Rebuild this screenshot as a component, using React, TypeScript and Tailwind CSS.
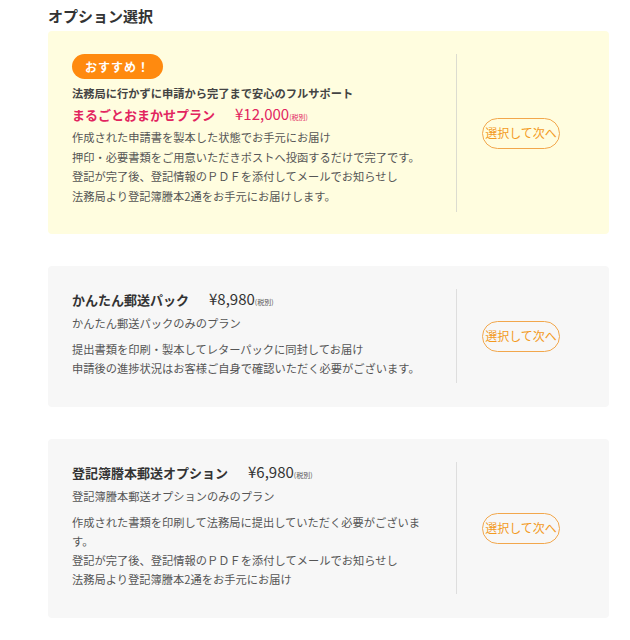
const FONT = { fontFamily: '"Noto Sans CJK JP", "Noto Sans", sans-serif' };

type Plan = {
  name: string;
  price: string;
  subtitle: string;
  lines: string[];
};

const PLANS: Plan[] = [
  {
    name: "かんたん郵送パック",
    price: "¥8,980",
    subtitle: "かんたん郵送パックのみのプラン",
    lines: [
      "提出書類を印刷・製本してレターパックに同封してお届け",
      "申請後の進捗状況はお客様ご自身で確認いただく必要がございます。",
    ],
  },
  {
    name: "登記簿謄本郵送オプション",
    price: "¥6,980",
    subtitle: "登記簿謄本郵送オプションのみのプラン",
    lines: [
      "作成された書類を印刷して法務局に提出していただく必要がございます。",
      "登記が完了後、登記情報のＰＤＦを添付してメールでお知らせし",
      "法務局より登記簿謄本2通をお手元にお届け",
    ],
  },
];

function NextButton() {
  return (
    <div className="flex flex-1 items-center justify-center">
      <button
        type="button"
        className="flex h-[31px] w-[78px] items-center justify-center rounded-full border border-[#f2a74c] text-[12px] leading-none text-[#f39a1e]"
      >
        選択して次へ
      </button>
    </div>
  );
}

function Tax({ className }: { className: string }) {
  return <span className={`text-[7px] leading-none ${className}`}>(税別)</span>;
}

export default function App() {
  return (
    <div className="min-h-[640px] bg-white pt-[4px] pl-12 pr-[21px] text-[#555]" style={FONT}>
      <h2 className="mb-[3px] text-[15px] font-bold leading-[24px] text-[#333]">
        オプション選択
      </h2>

      {/* recommended plan */}
      <div className="flex rounded-[4px] bg-[#fffddf] px-6 pt-[23px] pb-[22px]">
        <div className="w-[385px] border-r border-[#dcdcd0] pb-[6px] pr-7">
          <span className="flex h-[25px] w-[91px] items-center justify-center rounded-full bg-[#ff8a0f] text-[12px] font-bold tracking-[1px] text-white">
            おすすめ！
          </span>
          <p className="mt-[4px] text-[11.25px] font-bold leading-[20px] text-[#444]">
            法務局に行かずに申請から完了まで安心のフルサポート
          </p>
          <div className="flex items-baseline leading-[22px] text-[#e2255f]">
            <span className="text-[13px] font-bold">まるごとおまかせプラン</span>
            <span className="ml-5 text-[15px]">¥12,000</span>
            <Tax className="text-[#e2255f]" />
          </div>
          <div className="mt-[2px] text-[11.25px] leading-[19.5px]">
            <p>作成された申請書を製本した状態でお手元にお届け</p>
            <p>押印・必要書類をご用意いただきポストへ投函するだけで完了です。</p>
            <p>登記が完了後、登記情報のＰＤＦを添付してメールでお知らせし</p>
            <p>法務局より登記簿謄本2通をお手元にお届けします。</p>
          </div>
        </div>
        <NextButton />
      </div>

      {PLANS.map((plan) => (
        <div
          key={plan.name}
          className="mt-8 flex rounded-[4px] bg-[#f7f7f7] px-6 pt-[23px] pb-[24px]"
        >
          <div className="w-[385px] border-r border-[#dedede] pb-[5px] pr-7">
            <div className="flex items-baseline leading-[20px] text-[#333]">
              <span className="text-[13px] font-bold">{plan.name}</span>
              <span className="ml-5 text-[15px]">{plan.price}</span>
              <Tax className="text-[#555]" />
            </div>
            <p className="mt-[3px] text-[11.25px] leading-[20px]">{plan.subtitle}</p>
            <div className="mt-[7px] text-[11.25px] leading-[19px]">
              {plan.lines.map((line) => (
                <p key={line}>{line}</p>
              ))}
            </div>
          </div>
          <NextButton />
        </div>
      ))}
    </div>
  );
}
